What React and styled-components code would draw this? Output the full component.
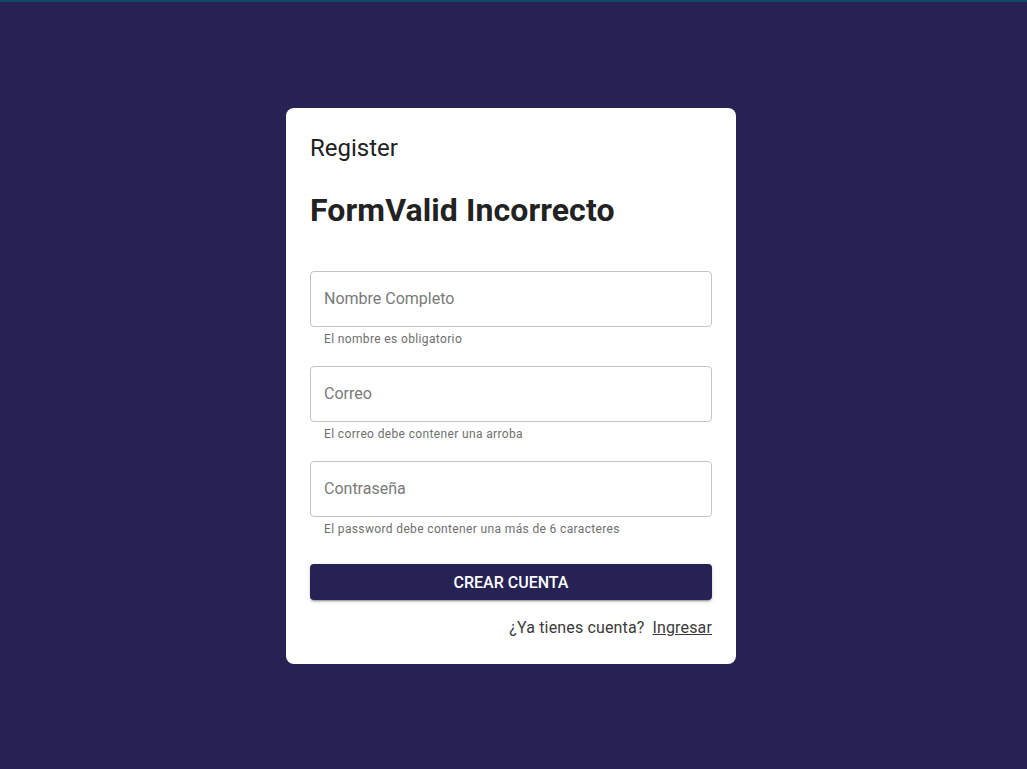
import React from "react";
import styled, { createGlobalStyle } from "styled-components";

const Global = createGlobalStyle`
  html, body { margin: 0; padding: 0; }
  body {
    font-family: Roboto, "Liberation Sans", sans-serif;
    background: #262254;
  }
`;

const Page = styled.div`
  min-height: 769px;
  box-sizing: border-box;
  border-top: 2px solid #0f4a63;
  display: flex;
  justify-content: center;
  align-items: flex-start;
  padding: 106px 5px 0 0;
`;

const Card = styled.div`
  width: 450px;
  box-sizing: border-box;
  background: #fff;
  border-radius: 8px;
  padding: 24px 24px 26px;
  display: flex;
  flex-direction: column;
`;

const Caption = styled.div`
  font-size: 24px;
  line-height: 32px;
  color: #212121;
  font-weight: 400;
`;

const Title = styled.h1`
  margin: 25px 0 0;
  font-size: 32px;
  line-height: 42px;
  font-weight: 700;
  letter-spacing: 0.1px;
  color: #222;
`;

const Form = styled.form`
  margin-top: 40px;
  display: flex;
  flex-direction: column;
  gap: 17px;
`;

const Field = styled.div`
  display: flex;
  flex-direction: column;
`;

const Input = styled.input`
  height: 56px;
  box-sizing: border-box;
  border: 1px solid #c4c4c4;
  border-radius: 4px;
  padding: 0 13px 2px;
  font-family: inherit;
  font-size: 16px;
  color: #222;
  outline: none;
  &::placeholder { color: #7a7a7a; }
`;

const Helper = styled.span`
  margin: 2px 14px 0;
  font-size: 12px;
  line-height: 20px;
  letter-spacing: 0.03em;
  color: #6f6f6f;
`;

const Button = styled.button`
  margin-top: 8px;
  height: 36px;
  border: none;
  border-radius: 4px;
  background: #262254;
  color: #fff;
  font-family: inherit;
  font-size: 16px;
  font-weight: 500;
  text-transform: uppercase;
  box-shadow: 0 3px 1px -2px rgba(0,0,0,0.2), 0 2px 2px 0 rgba(0,0,0,0.14), 0 1px 5px 0 rgba(0,0,0,0.12);
  cursor: pointer;
`;

const Footer = styled.div`
  margin-top: 18px;
  display: flex;
  justify-content: flex-end;
  gap: 8px;
  font-size: 16px;
  line-height: 20px;
  letter-spacing: 0.15px;
  color: #3a3a3a;
`;

const Link = styled.a`
  color: #3a3a3a;
  text-decoration: underline;
`;

const fields = [
  { placeholder: "Nombre Completo", type: "text", help: "El nombre es obligatorio" },
  { placeholder: "Correo", type: "email", help: "El correo debe contener una arroba" },
  { placeholder: "Contraseña", type: "password", help: "El password debe contener una más de 6 caracteres" },
];

export default function App() {
  return (
    <>
      <Global />
      <Page>
        <Card>
          <Caption>Register</Caption>
          <Title>FormValid Incorrecto</Title>
          <Form onSubmit={(e) => e.preventDefault()}>
            {fields.map((f) => (
              <Field key={f.placeholder}>
                <Input type={f.type} placeholder={f.placeholder} />
                <Helper>{f.help}</Helper>
              </Field>
            ))}
            <Button type="submit">Crear cuenta</Button>
          </Form>
          <Footer>
            <span>¿Ya tienes cuenta?</span>
            <Link href="#">Ingresar</Link>
          </Footer>
        </Card>
      </Page>
    </>
  );
}
